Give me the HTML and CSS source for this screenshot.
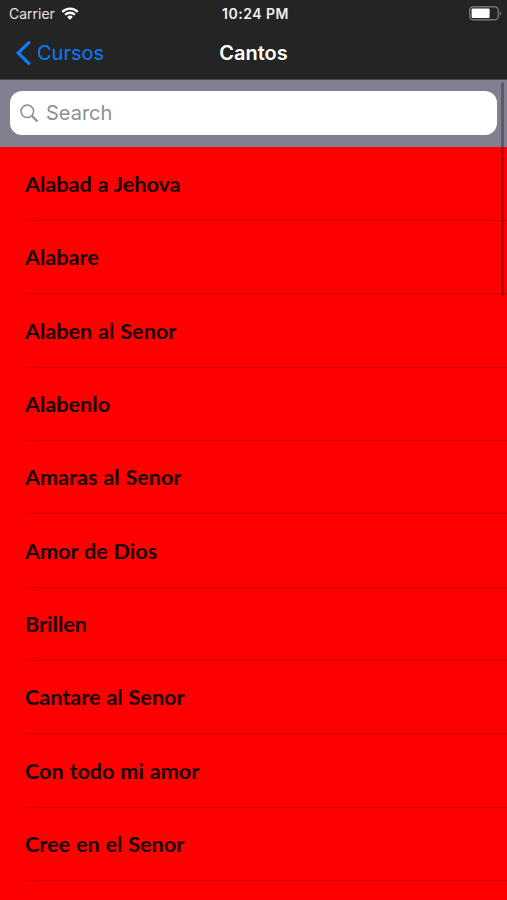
FILE: index.html
```html
<!DOCTYPE html>
<html lang="es">
<head>
  <meta charset="UTF-8">
  <meta name="viewport" content="width=device-width, initial-scale=1.0">
  <title>Cantos</title>
  <link rel="stylesheet" href="styles.css">
</head>
<body>

<header class="header">
  <div class="status-bar">
    <div class="carrier">
      <span>Carrier</span>
      <svg class="wifi" width="18" height="13" viewBox="0 0 18 13">
        <path d="M1.3 4.9a10.9 10.9 0 0 1 15.4 0M4.1 7.8a6.9 6.9 0 0 1 9.8 0" fill="none" stroke="#fff" stroke-width="2.3"/>
        <path d="M6.2 9.9a4 4 0 0 1 5.6 0L9 12.7z" fill="#fff"/>
      </svg>
    </div>
    <span class="time">10:24 PM</span>
    <svg class="battery" width="33" height="15" viewBox="0 0 33 15">
      <rect x=".8" y=".8" width="28.4" height="13" rx="3.6" fill="none" stroke="#757575" stroke-width="1.4"/>
      <rect x="2.6" y="2.6" width="18" height="9.4" rx="1.2" fill="#fff"/>
      <path d="M30.6 5v4.6c2.1-.8 2.1-3.8 0-4.6z" fill="#757575"/>
    </svg>
  </div>
  <nav class="nav-bar">
    <a class="back" href="#">
      <svg width="16" height="26" viewBox="0 0 16 26">
        <path d="M14.8 1.7 3.2 13l11.6 11.3" fill="none" stroke="#0a7cf7" stroke-width="3.2"/>
      </svg>
      <span>Cursos</span>
    </a>
    <h1>Cantos</h1>
  </nav>
</header>

<div class="search-bar">
  <label class="search-box">
    <svg width="19" height="19" viewBox="0 0 19 19">
      <circle cx="7.3" cy="7.3" r="6.3" fill="none" stroke="#8e8e93" stroke-width="1.5"/>
      <path d="M11.9 11.9l5.6 5.6" stroke="#8e8e93" stroke-width="2.2"/>
    </svg>
    <input type="text" placeholder="Search">
  </label>
</div>

<ul class="songs">
  <li>Alabad a Jehova</li>
  <li>Alabare</li>
  <li>Alaben al Senor</li>
  <li>Alabenlo</li>
  <li>Amaras al Senor</li>
  <li>Amor de Dios</li>
  <li>Brillen</li>
  <li>Cantare al Senor</li>
  <li>Con todo mi amor</li>
  <li>Cree en el Senor</li>
</ul>

<div class="scroll-indicator"></div>

</body>
</html>
```
FILE: styles.css
```css
* {
  box-sizing: border-box;
}
body {
  margin: 0;
  height: 900px;
  overflow: hidden;
  position: relative;
  background-color: #f00;
  font-family: Inter, "Liberation Sans", sans-serif;
}
.header {
  height: 80px;
  background-color: #242424;
  border-bottom: 1px solid #4c4c50;
  color: #fff;
}
.status-bar {
  display: grid;
  grid-template-columns: 1fr auto 1fr;
  align-items: center;
  height: 27px;
  padding: 0 5px 0 9px;
  font-size: 14px;
}
.carrier {
  display: flex;
  align-items: center;
  gap: 6px;
  color: #e4e4e4;
}
.time {
  font-weight: 600;
  font-size: 14px;
  letter-spacing: 0.5px;
  color: #f0f0f0;
}
.battery {
  justify-self: end;
}
.nav-bar {
  display: grid;
  grid-template-columns: 1fr auto 1fr;
  align-items: center;
  height: 52px;
  padding: 0 15px;
}
.back {
  display: flex;
  align-items: center;
  gap: 6px;
  color: #0a7cf7;
  font-size: 20px;
  text-decoration: none;
}
h1 {
  margin: 0;
  font-size: 20px;
  font-weight: 600;
}
.search-bar {
  height: 67px;
  padding: 11px 10px 12px;
  background-color: #827f91;
}
.search-box {
  display: flex;
  align-items: center;
  gap: 7px;
  height: 44px;
  padding: 0 10px;
  background-color: #fff;
  border-radius: 12px;
}
.search-box input {
  flex: 1;
  padding: 0;
  border: none;
  outline: none;
  font: 20px Inter, "Liberation Sans", sans-serif;
}
.search-box input::placeholder {
  color: #8e8e93;
}
.songs {
  list-style: none;
  margin: 0;
  padding: 0.7px 0 0 25px;
}
.songs li {
  display: flex;
  align-items: center;
  height: 73.35px;
  border-bottom: 1px solid #d00008;
  color: #180000;
  font-family: Lato, "Liberation Sans", sans-serif;
  font-size: 21.6px;
  font-weight: bold;
  word-spacing: 0.6px;
}
/* overlays the list on the right edge */
.scroll-indicator {
  position: absolute;
  top: 82px;
  right: 3px;
  width: 3px;
  height: 214px;
  border-radius: 2px;
  background-color: rgba(0, 0, 0, 0.28);
}
```
